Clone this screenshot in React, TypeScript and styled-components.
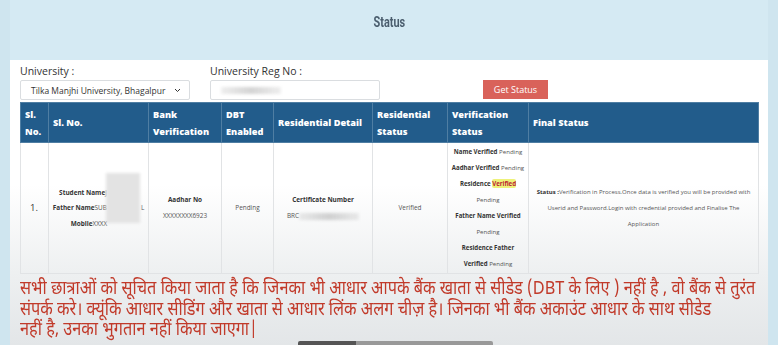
import React from "react";
import styled, { createGlobalStyle } from "styled-components";

const Global = createGlobalStyle`
  html, body { margin: 0; padding: 0; }
  body {
    width: 778px; height: 345px; overflow: hidden;
    background: #cfe5ef;
    font-family: "Open Sans", "Noto Sans", sans-serif;
  }
`;

const Page = styled.div`
  display: flex;
  height: 345px;
  padding: 0 10px 0 10px;
  box-sizing: border-box;
`;

const Panel = styled.div`
  flex: 1;
  display: flex;
  flex-direction: column;
  background: linear-gradient(180deg, #ffffff 0px, #ffffff 185px, #eef0f1 272px, #e3e6e8 345px);
  position: relative;
  overflow: hidden;
`;

const Header = styled.div`
  height: 60px;
  flex-shrink: 0;
  background: #d5eaf3;
  display: flex;
  justify-content: center;
  padding-top: 14px;
  box-sizing: border-box;
`;

const Title = styled.h1`
  margin: 0;
  font-family: "Roboto", sans-serif;
  font-weight: 700;
  font-size: 14px;
  line-height: 16px;
  color: #4a5d6d;
  transform: scaleX(0.78);
`;

const Content = styled.div`
  padding: 4px 10px 0 10px;
  display: flex;
  flex-direction: column;
`;

const FormRow = styled.div`
  display: flex;
  align-items: flex-end;
`;

const Field = styled.div<{ $w: number; $mr: number }>`
  display: flex;
  flex-direction: column;
  width: ${(p) => p.$w}px;
  margin-right: ${(p) => p.$mr}px;
`;

const Label = styled.label`
  font-size: 10.5px;
  color: #333;
  height: 15px;
  line-height: 15px;
  margin-bottom: 1px;
`;

const Box = styled.div`
  height: 20px;
  border: 1px solid #dadde0;
  border-radius: 2px;
  box-sizing: border-box;
  display: flex;
  align-items: center;
  justify-content: space-between;
  padding: 0 8px 0 10px;
  font-size: 8.5px;
  color: #333;
  background: #fff;
`;

const Blur = styled.span<{ $w: number }>`
  display: inline-block;
  width: ${(p) => p.$w}px;
  height: 7px;
  vertical-align: middle;
  background: linear-gradient(90deg, rgba(120,120,120,0.12), rgba(120,120,120,0.32), rgba(120,120,120,0.12));
  filter: blur(1.5px);
`;

const Button = styled.button`
  height: 19px;
  width: 65px;
  margin-left: 103px;
  margin-bottom: 1px;
  background: #d9625a;
  border: none;
  color: #fff;
  font-size: 9px;
  font-family: "Open Sans", sans-serif;
  padding: 0;
`;

const Table = styled.table`
  margin-top: 2px;
  width: 738px;
  border-collapse: collapse;
  table-layout: fixed;
`;

const Th = styled.th<{ $w: number }>`
  width: ${(p) => p.$w}px;
  background: #225c8b;
  color: #fff;
  text-align: left;
  font-size: 9.2px;
  font-weight: 800;
  line-height: 17px;
  padding: 0 3px 0 4px;
  height: 40px;
  box-sizing: border-box;
  border: 1px solid #4f7ea3;
  vertical-align: middle;
  white-space: nowrap;
`;

const Td = styled.td<{ $align?: string }>`
  border: 1px solid #e1e3e5;
  height: 131px;
  box-sizing: border-box;
  text-align: ${(p) => p.$align || "center"};
  vertical-align: middle;
  font-size: 6.4px;
  color: #555;
  padding: 0 3px;
  line-height: 16px;
`;

const FinalTd = styled(Td)`
  font-size: 6px;
  padding: 0 6px;
`;

const VerifyTd = styled(Td)`
  font-size: 6.1px;
  padding: 0;
  white-space: nowrap;
  line-height: 16px;
`;

const Num = styled.span`
  font-size: 9.5px;
  color: #333;
  padding-left: 6px;
`;

const B = styled.b`
  font-weight: 700;
  color: #333;
`;

const Hl = styled.span`
  background: #eef27a;
  color: #b23;
  border-radius: 2px;
`;

const StudentBox = styled.div`
  position: relative;
  margin: 0 -3px;
  line-height: 15.5px;
`;

const Gap = styled.span<{ $w: number }>`
  display: inline-block;
  width: ${(p) => p.$w}px;
`;

const Smudge = styled.div`
  position: absolute;
  left: 57px;
  top: -12px;
  width: 34px;
  height: 50px;
  background: rgba(226,226,226,0.95);
  filter: blur(1.5px);
`;

const Notice = styled.p`
  margin: 6px 0 0 10px;
  color: #c13a2a;
  font-size: 18.5px;
  line-height: 20.5px;
  font-family: "Noto Sans Devanagari", "Lohit Devanagari", sans-serif;
  white-space: nowrap;
  transform: scaleX(0.88);
  transform-origin: left center;
`;

const Player = styled.div`
  position: absolute;
  left: 288px;
  bottom: 0;
  width: 195px;
  height: 4px;
  background: linear-gradient(90deg, #555 0 30%, #999 30% 100%);
  border-radius: 2px 2px 0 0;
`;

export default function App() {
  return (
    <>
      <Global />
      <Page>
        <Panel>
          <Header>
            <Title>Status</Title>
          </Header>
          <Content>
            <FormRow>
              <Field $w={170} $mr={20}>
                <Label>University :</Label>
                <Box>
                  <span>Tilka Manjhi University, Bhagalpur</span>
                  <svg width="7" height="5" viewBox="0 0 7 5">
                    <path d="M1 1l2.5 2.5L6 1" stroke="#333" strokeWidth="1" fill="none" />
                  </svg>
                </Box>
              </Field>
              <Field $w={170} $mr={0}>
                <Label>University Reg No :</Label>
                <Box>
                  <Blur $w={60} />
                </Box>
              </Field>
              <Button>Get Status</Button>
            </FormRow>
            <Table>
              <thead>
                <tr>
                  <Th $w={28}>Sl.<br />No.</Th>
                  <Th $w={100}>Sl. No.</Th>
                  <Th $w={73}>Bank<br />Verification</Th>
                  <Th $w={52}>DBT<br />Enabled</Th>
                  <Th $w={99}>Residential Detail</Th>
                  <Th $w={75}>Residential<br />Status</Th>
                  <Th $w={81}>Verification<br />Status</Th>
                  <Th $w={230}>Final Status</Th>
                </tr>
              </thead>
              <tbody>
                <tr>
                  <Td $align="left"><Num>1.</Num></Td>
                  <Td>
                    <StudentBox>
                      <Smudge />
                      <div><B>Student Name</B>J<Gap $w={31} /></div>
                      <div><B>Father Name</B>SUB<Gap $w={34} />L</div>
                      <div><B>Mobile</B>XXXX<Gap $w={19} /></div>
                    </StudentBox>
                  </Td>
                  <Td>
                    <div><B>Aadhar No</B></div>
                    <div>XXXXXXXX6923</div>
                  </Td>
                  <Td>Pending</Td>
                  <Td>
                    <div><B>Certificate Number</B></div>
                    <div>BRC<Blur $w={60} /></div>
                  </Td>
                  <Td>Verified</Td>
                  <VerifyTd>
                    <div><B>Name Verified</B> Pending</div>
                    <div><B>Aadhar Verified</B> Pending</div>
                    <div><B>Residence <Hl>Verified</Hl></B></div>
                    <div>Pending</div>
                    <div><B>Father Name Verified</B></div>
                    <div>Pending</div>
                    <div><B>Residence Father</B></div>
                    <div><B>Verified</B> Pending</div>
                  </VerifyTd>
                  <FinalTd>
                    <B>Status :</B>Verification in Process.Once data is verified you will be provided with Userid and Password.Login with credential provided and Finalise The Application
                  </FinalTd>
                </tr>
              </tbody>
            </Table>
          </Content>
          <Notice>
            सभी छात्राओं को सूचित किया जाता है कि जिनका भी आधार आपके बैंक खाता से सीडेड (DBT के लिए ) नहीं है , वो बैंक से तुरंत
            <br />
            संपर्क करे। क्यूंकि आधार सीडिंग और खाता से आधार लिंक अलग चीज़ है। जिनका भी बैंक अकाउंट आधार के साथ सीडेड
            <br />
            नहीं है, उनका भुगतान नहीं किया जाएगा|
          </Notice>
          <Player />
        </Panel>
      </Page>
    </>
  );
}
